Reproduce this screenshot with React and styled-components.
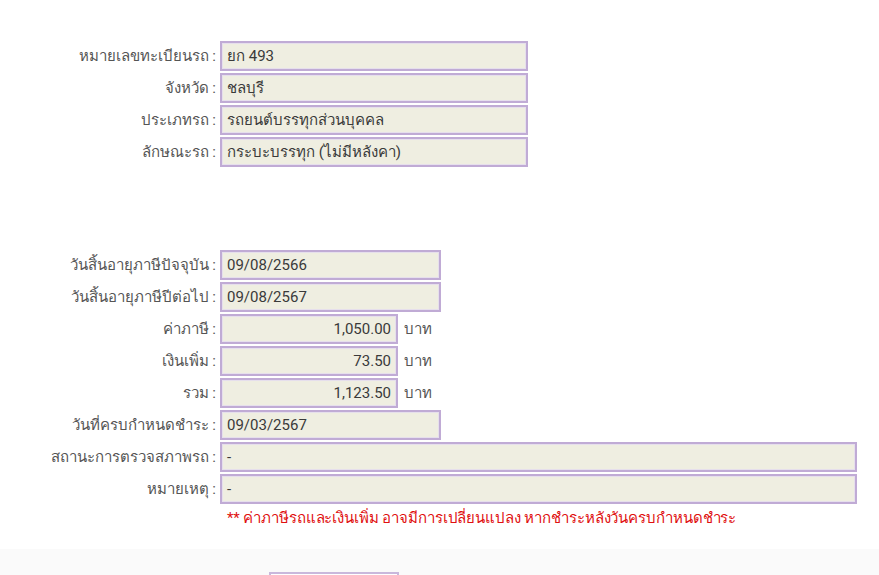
import React from "react";
import styled, { createGlobalStyle } from "styled-components";

const Global = createGlobalStyle`
  html, body { margin: 0; padding: 0; background: #ffffff; }
  body { font-family: Roboto, "Noto Sans", "DejaVu Sans", sans-serif; }
`;

const Page = styled.div`
  width: 879px;
  height: 575px;
  overflow: hidden;
  display: flex;
  flex-direction: column;
`;

const Main = styled.div`
  padding-top: 41px;
  display: flex;
  flex-direction: column;
`;

const Group = styled.div`
  display: grid;
  grid-template-columns: 220px auto;
  row-gap: 2px;
  margin-bottom: ${p => p.$gap || 0}px;
`;

const Label = styled.div`
  height: 30px;
  display: flex;
  align-items: center;
  justify-content: flex-end;
  padding-right: 4px;
  font-size: 15px;
  color: #555;
  white-space: nowrap;
`;

const Field = styled.div`
  display: flex;
  align-items: center;
  gap: 6px;
`;

const Box = styled.div`
  box-sizing: border-box;
  width: ${p => p.$w}px;
  height: 30px;
  border: 2px solid #c0abd5;
  box-shadow: inset 0 0 0 1px #e6dfec;
  background: #efeee1;
  display: flex;
  align-items: center;
  justify-content: ${p => (p.$right ? "flex-end" : "flex-start")};
  padding: 0 5px;
  font-size: 15px;
  color: #3a3a3a;
  white-space: nowrap;
`;

const Unit = styled.span`
  font-size: 15px;
  color: #555;
`;

const Note = styled.div`
  margin: 0 0 0 227px;
  height: 28px;
  display: flex;
  align-items: center;
  font-size: 15px;
  letter-spacing: -0.1px;
  color: #e01010;
`;

const Footer = styled.div`
  margin-top: 17px;
  flex: 1;
  background: #fafafa;
`;

const FooterBox = styled.div`
  margin: 23px 0 0 269px;
  width: 130px;
  height: 20px;
  box-sizing: border-box;
  border: 2px solid #c9b8dc;
  border-bottom: none;
  background: #ffffff;
`;

const top = [
  ["หมายเลขทะเบียนรถ :", "ยก 493"],
  ["จังหวัด :", "ชลบุรี"],
  ["ประเภทรถ :", "รถยนต์บรรทุกส่วนบุคคล"],
  ["ลักษณะรถ :", "กระบะบรรทุก (ไม่มีหลังคา)"],
];

const bottom = [
  ["วันสิ้นอายุภาษีปัจจุบัน :", "09/08/2566", 221],
  ["วันสิ้นอายุภาษีปีต่อไป :", "09/08/2567", 221],
  ["ค่าภาษี :", "1,050.00", 178, true],
  ["เงินเพิ่ม :", "73.50", 178, true],
  ["รวม :", "1,123.50", 178, true],
  ["วันที่ครบกำหนดชำระ :", "09/03/2567", 221],
  ["สถานะการตรวจสภาพรถ :", "-", 637],
  ["หมายเหตุ :", "-", 637],
];

export default function App() {
  return (
    <Page>
      <Global />
      <Main>
        <Group $gap={83}>
          {top.map(([l, v]) => (
            <React.Fragment key={l}>
              <Label>{l}</Label>
              <Field>
                <Box $w={308}>{v}</Box>
              </Field>
            </React.Fragment>
          ))}
        </Group>
        <Group>
          {bottom.map(([l, v, w, money]) => (
            <React.Fragment key={l}>
              <Label>{l}</Label>
              <Field>
                <Box $w={w} $right={money}>{v}</Box>
                {money && <Unit>บาท</Unit>}
              </Field>
            </React.Fragment>
          ))}
        </Group>
        <Note>** ค่าภาษีรถและเงินเพิ่ม อาจมีการเปลี่ยนแปลง หากชำระหลังวันครบกำหนดชำระ</Note>
      </Main>
      <Footer>
        <FooterBox />
      </Footer>
    </Page>
  );
}
